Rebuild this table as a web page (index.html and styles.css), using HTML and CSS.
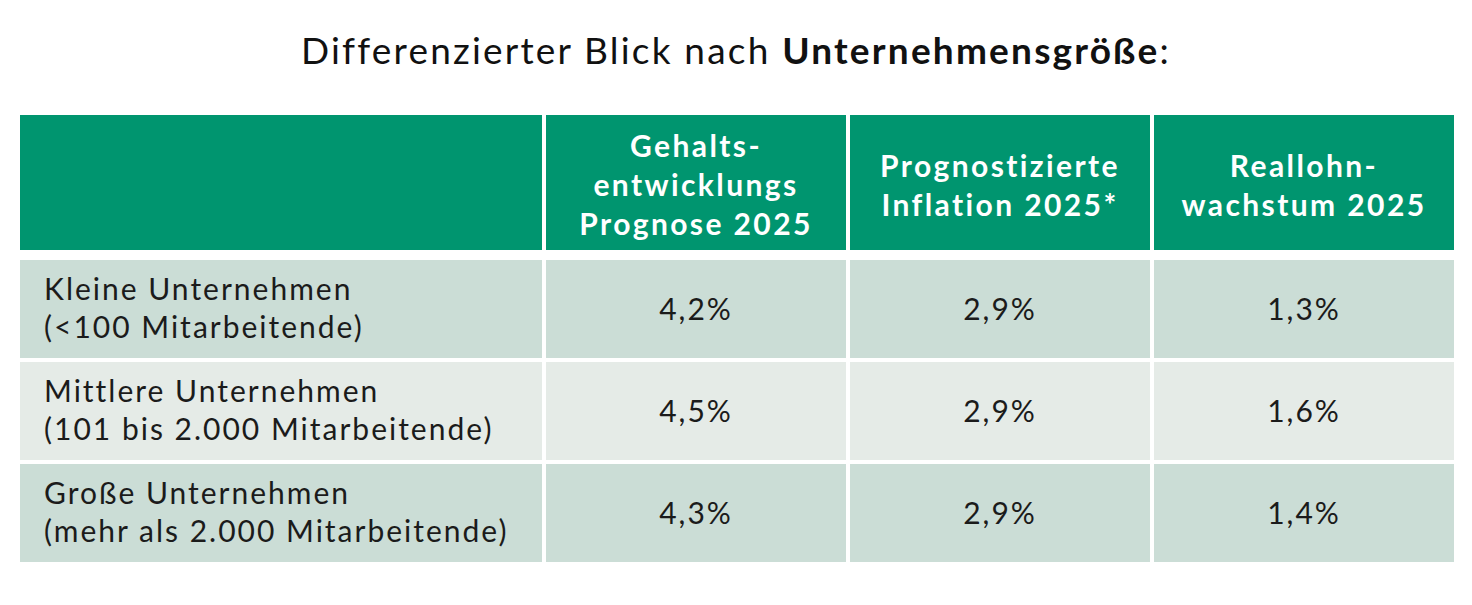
FILE: index.html
```html
<!DOCTYPE html>
<html lang="de">
<head>
<meta charset="utf-8">
<title>Differenzierter Blick nach Unternehmensgröße</title>
<link rel="stylesheet" href="styles.css">
</head>
<body>
<main class="page">
  <h1 class="title">Differenzierter Blick nach <strong>Unternehmensgröße</strong>:</h1>
  <div class="table">
    <div class="row head">
      <div class="cell"></div>
      <div class="cell">Gehalts-<br>entwicklungs<br>Prognose 2025</div>
      <div class="cell">Prognostizierte<br>Inflation 2025*</div>
      <div class="cell">Reallohn-<br>wachstum 2025</div>
    </div>
    <div class="row dark">
      <div class="cell label">Kleine Unternehmen<br>(&lt;100 Mitarbeitende)</div>
      <div class="cell">4,2%</div>
      <div class="cell">2,9%</div>
      <div class="cell">1,3%</div>
    </div>
    <div class="row light">
      <div class="cell label">Mittlere Unternehmen<br>(101 bis 2.000 Mitarbeitende)</div>
      <div class="cell">4,5%</div>
      <div class="cell">2,9%</div>
      <div class="cell">1,6%</div>
    </div>
    <div class="row dark">
      <div class="cell label">Große Unternehmen<br>(mehr als 2.000 Mitarbeitende)</div>
      <div class="cell">4,3%</div>
      <div class="cell">2,9%</div>
      <div class="cell">1,4%</div>
    </div>
  </div>
</main>
</body>
</html>
```

FILE: styles.css
```css
html, body {
  margin: 0;
  padding: 0;
  background: #ffffff;
}

body {
  font-family: Lato, "Open Sans", "Noto Sans", sans-serif;
  color: #1b1b1b;
}

.page {
  width: 1472px;
  height: 605px;
  padding-top: 26px;
  box-sizing: border-box;
}

.title {
  margin: 0 0 41px;
  font-size: 37px;
  line-height: 48px;
  font-weight: 400;
  letter-spacing: 2.2px;
  text-align: center;
  color: #111111;
}

.title strong {
  font-weight: 700;
}

.table {
  margin-left: 20px;
  width: 1434px;
  display: flex;
  flex-direction: column;
  gap: 4px;
}

.row {
  display: grid;
  grid-template-columns: 522px 300px 300px 300px;
  column-gap: 4px;
  height: 98px;
}

.row.head {
  height: 135px;
  margin-bottom: 6px;
}

.cell {
  display: flex;
  align-items: center;
  justify-content: center;
  text-align: center;
  font-size: 30px;
  line-height: 38px;
  letter-spacing: 2px;
  padding-bottom: 2px;
  box-sizing: border-box;
}

.head .cell {
  background: #00956f;
  color: #ffffff;
  font-weight: 700;
  line-height: 39px;
  letter-spacing: 2.4px;
  padding-top: 4px;
  padding-bottom: 0;
}

.dark .cell {
  background: #cbddd6;
}

.light .cell {
  background: #e5ebe7;
}

.cell.label {
  justify-content: flex-start;
  text-align: left;
  padding-left: 24px;
  padding-bottom: 4px;
}
```
